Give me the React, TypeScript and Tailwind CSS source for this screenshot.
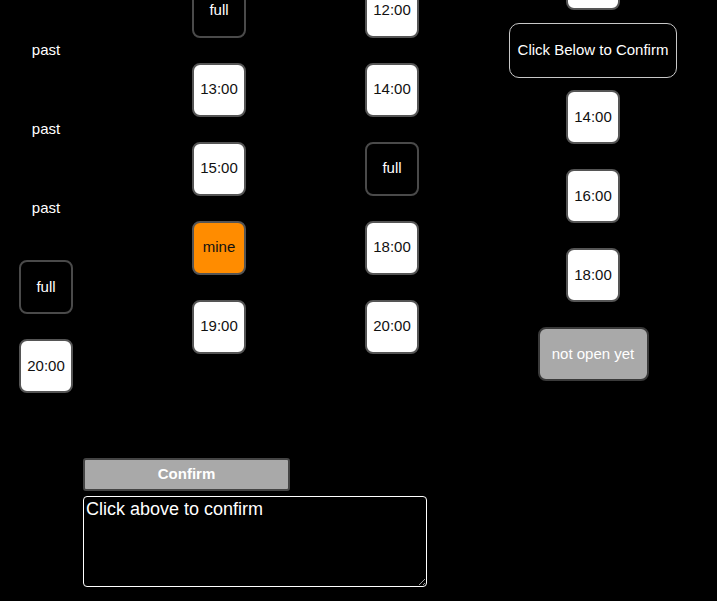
import React from "react";

type Slot = { label: string; kind: "open" | "full" | "mine" | "past" | "closed" | "note" };

const col1: Slot[] = [
  { label: "past", kind: "past" },
  { label: "past", kind: "past" },
  { label: "past", kind: "past" },
  { label: "full", kind: "full" },
  { label: "20:00", kind: "open" },
];

const col2: Slot[] = [
  { label: "full", kind: "full" },
  { label: "13:00", kind: "open" },
  { label: "15:00", kind: "open" },
  { label: "mine", kind: "mine" },
  { label: "19:00", kind: "open" },
];

const col3: Slot[] = [
  { label: "12:00", kind: "open" },
  { label: "14:00", kind: "open" },
  { label: "full", kind: "full" },
  { label: "18:00", kind: "open" },
  { label: "20:00", kind: "open" },
];

// first box sits mostly above the fold, its label is not visible
const col4: Slot[] = [
  { label: "", kind: "open" },
  { label: "Click Below to Confirm", kind: "note" },
  { label: "14:00", kind: "open" },
  { label: "16:00", kind: "open" },
  { label: "18:00", kind: "open" },
  { label: "not open yet", kind: "closed" },
];

function SlotBox({ slot }: { slot: Slot }) {
  if (slot.kind === "past") {
    return (
      <div className="my-[12.5px] h-[54px] w-[54px] flex items-center justify-center text-white">
        {slot.label}
      </div>
    );
  }
  if (slot.kind === "note") {
    return (
      <div className="h-[55px] px-[8px] flex items-center justify-center rounded-[10px] border border-[#c8c8c8] text-white whitespace-nowrap">
        {slot.label}
      </div>
    );
  }
  if (slot.kind === "closed") {
    return (
      <div className="my-[12.5px] h-[54px] w-[111px] flex items-center justify-center rounded-[8px] border-2 border-[#3a3a3a] bg-[#a9a9a9] text-white whitespace-nowrap">
        {slot.label}
      </div>
    );
  }
  const styles =
    slot.kind === "full"
      ? "bg-black text-white border-[#4a4a4a]"
      : slot.kind === "mine"
      ? "bg-[#ff8c00] text-[#111] border-[#555]"
      : "bg-white text-[#111] border-[#555]";
  return (
    <div
      className={`my-[12.5px] h-[54px] w-[54px] flex items-center justify-center rounded-[8px] border-2 ${styles}`}
    >
      {slot.label}
    </div>
  );
}

function Column({ slots, className }: { slots: Slot[]; className: string }) {
  return (
    <div className={`flex flex-col items-center shrink-0 ${className}`}>
      {slots.map((s, i) => (
        <SlotBox key={i} slot={s} />
      ))}
    </div>
  );
}

export default function App() {
  return (
    <div className="h-screen w-full overflow-hidden bg-black font-['Liberation_Sans',Arial,sans-serif] text-[15px]">
      <div className="flex items-start">
        <Column slots={col1} className="w-[92px] mt-[10.5px]" />
        <Column slots={col2} className="w-[254px] mt-[-29px]" />
        <Column slots={col3} className="w-[92px] mt-[-29px]" />
        <Column slots={col4} className="w-[180px] ml-[65px] mt-[-56.5px]" />
      </div>
      <div className="ml-[83px] mt-[52.5px] flex flex-col gap-[5px]">
        <button className="h-[33px] w-[207px] rounded-[3px] border-2 border-[#444] bg-[#a9a9a9] text-[15px] font-bold text-white">
          Confirm
        </button>
        <textarea
          readOnly
          defaultValue="Click above to confirm"
          className="h-[91px] w-[344px] rounded-[4px] border border-white bg-black p-[2px] text-[18px] leading-[1.15] text-white outline-none"
        />
      </div>
    </div>
  );
}
